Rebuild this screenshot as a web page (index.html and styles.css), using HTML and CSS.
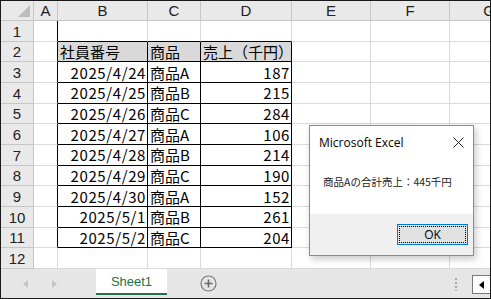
FILE: index.html
```html
<!DOCTYPE html>
<html lang="ja">
  <head>
    <meta charset="UTF-8" />
    <title>Excel</title>
    <link rel="stylesheet" href="styles.css">
  </head>
  <body>
    <div class="window">
      <div class="sheet">
        <div class="corner"></div>
        <div class="col">A</div>
        <div class="col">B</div>
        <div class="col">C</div>
        <div class="col">D</div>
        <div class="col">E</div>
        <div class="col">F</div>
        <div class="col">G</div>

        <div class="row">1</div>
        <div class="cell edge-r"></div>
        <div class="cell edge-b"></div>
        <div class="cell edge-b"></div>
        <div class="cell edge-b"></div>
        <div class="cell"></div>
        <div class="cell"></div>
        <div class="cell"></div>

        <div class="row">2</div>
        <div class="cell edge-r"></div>
        <div class="cell tbl head">社員番号</div>
        <div class="cell tbl head">商品</div>
        <div class="cell tbl head">売上（千円）</div>
        <div class="cell"></div>
        <div class="cell"></div>
        <div class="cell"></div>

        <div class="row">3</div>
        <div class="cell edge-r"></div>
        <div class="cell tbl num">2025/4/24</div>
        <div class="cell tbl">商品A</div>
        <div class="cell tbl num">187</div>
        <div class="cell"></div>
        <div class="cell"></div>
        <div class="cell"></div>

        <div class="row">4</div>
        <div class="cell edge-r"></div>
        <div class="cell tbl num">2025/4/25</div>
        <div class="cell tbl">商品B</div>
        <div class="cell tbl num">215</div>
        <div class="cell"></div>
        <div class="cell"></div>
        <div class="cell"></div>

        <div class="row">5</div>
        <div class="cell edge-r"></div>
        <div class="cell tbl num">2025/4/26</div>
        <div class="cell tbl">商品C</div>
        <div class="cell tbl num">284</div>
        <div class="cell"></div>
        <div class="cell"></div>
        <div class="cell"></div>

        <div class="row">6</div>
        <div class="cell edge-r"></div>
        <div class="cell tbl num">2025/4/27</div>
        <div class="cell tbl">商品A</div>
        <div class="cell tbl num">106</div>
        <div class="cell"></div>
        <div class="cell"></div>
        <div class="cell"></div>

        <div class="row">7</div>
        <div class="cell edge-r"></div>
        <div class="cell tbl num">2025/4/28</div>
        <div class="cell tbl">商品B</div>
        <div class="cell tbl num">214</div>
        <div class="cell"></div>
        <div class="cell"></div>
        <div class="cell"></div>

        <div class="row">8</div>
        <div class="cell edge-r"></div>
        <div class="cell tbl num">2025/4/29</div>
        <div class="cell tbl">商品C</div>
        <div class="cell tbl num">190</div>
        <div class="cell"></div>
        <div class="cell"></div>
        <div class="cell"></div>

        <div class="row">9</div>
        <div class="cell edge-r"></div>
        <div class="cell tbl num">2025/4/30</div>
        <div class="cell tbl">商品A</div>
        <div class="cell tbl num">152</div>
        <div class="cell"></div>
        <div class="cell"></div>
        <div class="cell"></div>

        <div class="row">10</div>
        <div class="cell edge-r"></div>
        <div class="cell tbl num">2025/5/1</div>
        <div class="cell tbl">商品B</div>
        <div class="cell tbl num">261</div>
        <div class="cell"></div>
        <div class="cell"></div>
        <div class="cell"></div>

        <div class="row">11</div>
        <div class="cell edge-r"></div>
        <div class="cell tbl num">2025/5/2</div>
        <div class="cell tbl">商品C</div>
        <div class="cell tbl num">204</div>
        <div class="cell"></div>
        <div class="cell"></div>
        <div class="cell"></div>

        <div class="row">12</div>
        <div class="cell"></div>
        <div class="cell"></div>
        <div class="cell"></div>
        <div class="cell"></div>
        <div class="cell"></div>
        <div class="cell"></div>
        <div class="cell"></div>
      </div>

      <div class="tabbar">
        <div class="nav">
          <svg width="6" height="8" viewBox="0 0 6 8"><path d="M5 0 L0 4 L5 8 Z" fill="#c4c4c4"/></svg>
          <svg width="6" height="8" viewBox="0 0 6 8"><path d="M1 0 L6 4 L1 8 Z" fill="#c4c4c4"/></svg>
        </div>
        <div class="tab">Sheet1</div>
        <div class="add">
          <svg width="17" height="17" viewBox="0 0 17 17">
            <circle cx="8.5" cy="8.5" r="7.5" fill="none" stroke="#7a7a7a" stroke-width="1.2"/>
            <path d="M8.5 4.5 V12.5 M4.5 8.5 H12.5" stroke="#6a6a6a" stroke-width="1.6"/>
          </svg>
        </div>
        <div class="spacer"></div>
        <div class="grip"></div>
        <div class="scroll-btn">
          <svg width="5" height="8" viewBox="0 0 5 8"><path d="M5 0 L0 4 L5 8 Z" fill="#000"/></svg>
        </div>
      </div>

      <div class="dialog">
        <div class="dlg-title">
          <span>Microsoft Excel</span>
          <svg width="11" height="11" viewBox="0 0 11 11"><path d="M0.5 0.5 L10.5 10.5 M10.5 0.5 L0.5 10.5" stroke="#222" stroke-width="1"/></svg>
        </div>
        <div class="dlg-body">商品Aの合計売上：445千円</div>
        <div class="dlg-foot">
          <button class="ok" type="button"><span>OK</span></button>
        </div>
      </div>
    </div>
  </body>
</html>
```

FILE: styles.css
```css
* {
  box-sizing: border-box;
}
body {
  margin: 0;
  background: #fff;
}
.window {
  position: relative;
  width: 491px;
  height: 299px;
  border: 1px solid #1a1a1a;
  overflow: hidden;
  font-family: "Noto Sans CJK JP", "Liberation Sans", sans-serif;
}
.sheet {
  display: grid;
  grid-template-columns: 33px 24px 90px 53px 91px 79px 79px 79px;
  grid-template-rows: 20px repeat(12, 1fr);
  height: 268px;
}
.corner,
.col,
.row {
  background: #e9e9e9;
  border-right: 1px solid #c6c6c6;
  border-bottom: 1px solid #c6c6c6;
  color: #222;
  font-family: "Liberation Sans", sans-serif;
  font-size: 15px;
  display: flex;
  align-items: center;
  justify-content: center;
}
.row {
  padding-top: 1px;
}
.corner {
  position: relative;
}
.corner::after {
  content: "";
  position: absolute;
  right: 3px;
  bottom: 3px;
  border-style: solid;
  border-width: 0 0 12px 12px;
  border-color: transparent transparent #bcbcbc transparent;
}
.cell {
  border-right: 1px solid #dadada;
  border-bottom: 1px solid #dadada;
  font-size: 15px;
  color: #000;
  display: flex;
  align-items: center;
  padding: 0 2px;
  white-space: nowrap;
  overflow: hidden;
  line-height: 1;
}
.cell.edge-r {
  border-right-color: #000;
}
.cell.edge-b {
  border-bottom-color: #000;
}
.cell.tbl {
  border-right-color: #000;
  border-bottom-color: #000;
}
.cell.head {
  background: #d9d9d9;
}
.cell.num {
  justify-content: flex-end;
  letter-spacing: 0.6px;
  padding-right: 1px;
}
.tabbar {
  display: flex;
  align-items: stretch;
  height: 29px;
  background: #e6e6e6;
}
.nav {
  width: 95px;
  display: flex;
  align-items: center;
  padding-left: 22px;
  gap: 22px;
}
.tab {
  width: 71px;
  background: #fff;
  border-bottom: 2px solid #217346;
  color: #217346;
  font-family: "Liberation Sans", sans-serif;
  font-size: 13px;
  display: flex;
  align-items: center;
  justify-content: center;
  margin-bottom: 3px;
}
.add {
  width: 82px;
  display: flex;
  align-items: center;
  justify-content: center;
}
.spacer {
  flex: 1;
}
.grip {
  width: 2px;
  margin: 9px 15px 7px 0;
  background: repeating-linear-gradient(#a8a8a8 0 2px, transparent 2px 4px);
}
.scroll-btn {
  width: 18px;
  margin: 6px 0 4px;
  background: #fff;
  border: 1px solid #7a7a7a;
  border-right: none;
  display: flex;
  align-items: center;
  justify-content: center;
}
.dialog {
  position: absolute;
  left: 308px;
  top: 124px;
  width: 165px;
  height: 131px;
  background: #fff;
  border: 1px solid #8c8c8c;
  box-shadow: 2px 3px 7px rgba(0, 0, 0, 0.22);
  display: flex;
  flex-direction: column;
}
.dlg-title {
  display: flex;
  justify-content: space-between;
  align-items: center;
  height: 32px;
  padding: 0 9px 0 9px;
  font-family: "Open Sans", "Liberation Sans", sans-serif;
  font-size: 12px;
  color: #000;
}
.dlg-body {
  flex: 1;
  padding: 16px 0 0 13px;
  font-size: 10.5px;
  color: #222;
}
.dlg-foot {
  height: 41px;
  background: #f0f0f0;
  display: flex;
  justify-content: flex-end;
  align-items: center;
  padding-right: 5px;
}
.ok {
  width: 71px;
  height: 21px;
  background: #e1e1e1;
  border: 1px solid #0078d7;
  padding: 1px;
  font-family: "Open Sans", "Liberation Sans", sans-serif;
  font-size: 12px;
}
.ok span {
  display: flex;
  align-items: center;
  justify-content: center;
  height: 100%;
  border: 1px dotted #000;
}
```
